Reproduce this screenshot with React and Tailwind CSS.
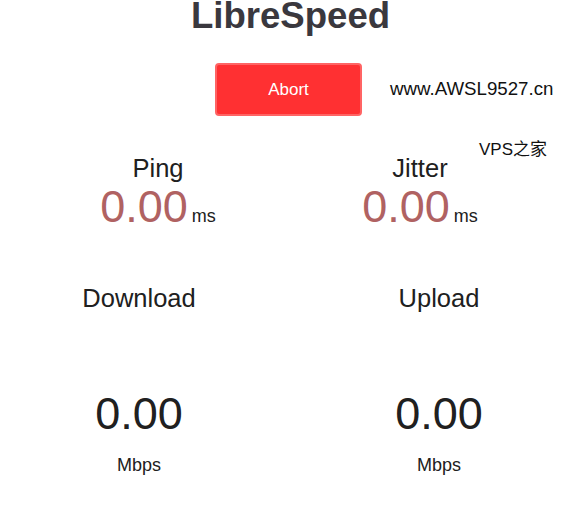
export default function App() {
  const font = { fontFamily: '"Liberation Sans", Arial, "Noto Sans CJK SC", sans-serif' };
  return (
    <div className="w-[581px] h-[505px] bg-white overflow-hidden text-[#202020]" style={font}>
      <h1 className="mt-[-2px] text-center text-[36.6px] leading-[36px] font-bold text-[#3a383e]">LibreSpeed</h1>
      <div className="relative mt-[29px] flex justify-center pr-[4px]">
        <div className="w-[147px] h-[53px] flex items-center justify-center rounded-[4px] border-2 border-[#ff6464] bg-[#ff3032] text-white text-[17px]">
          Abort
        </div>
        <div className="absolute left-[390px] top-[16px] text-[18.7px] leading-[20px] text-[#111]">www.AWSL9527.cn</div>
      </div>
      <div className="mt-[24px] flex justify-end pr-[34px] text-[17px] leading-[20px] text-[#111]">VPS之家</div>
      <div className="mt-[-6px] flex justify-center gap-[62px] pr-[3px]">
        {["Ping", "Jitter"].map((n) => (
          <div key={n} className="w-[200px] flex flex-col items-center">
            <div className="text-[25.5px] leading-[28px]">{n}</div>
            <div className="flex items-baseline mt-[0px]">
              <span className="text-[45px] leading-[50px] text-[#b06262]">0.00</span>
              <span className="ml-[4px] text-[18px]">ms</span>
            </div>
          </div>
        ))}
      </div>
      <div className="mt-[52px] flex justify-center gap-[100px] pr-[3px]">
        {["Download", "Upload"].map((n) => (
          <div key={n} className="w-[200px] flex flex-col items-center">
            <div className="text-[25.5px] leading-[28px]">{n}</div>
            <div className="mt-[77px] text-[45px] leading-[50px]">0.00</div>
            <div className="mt-[16px] text-[18px] leading-[20px]">Mbps</div>
          </div>
        ))}
      </div>
    </div>
  );
}
